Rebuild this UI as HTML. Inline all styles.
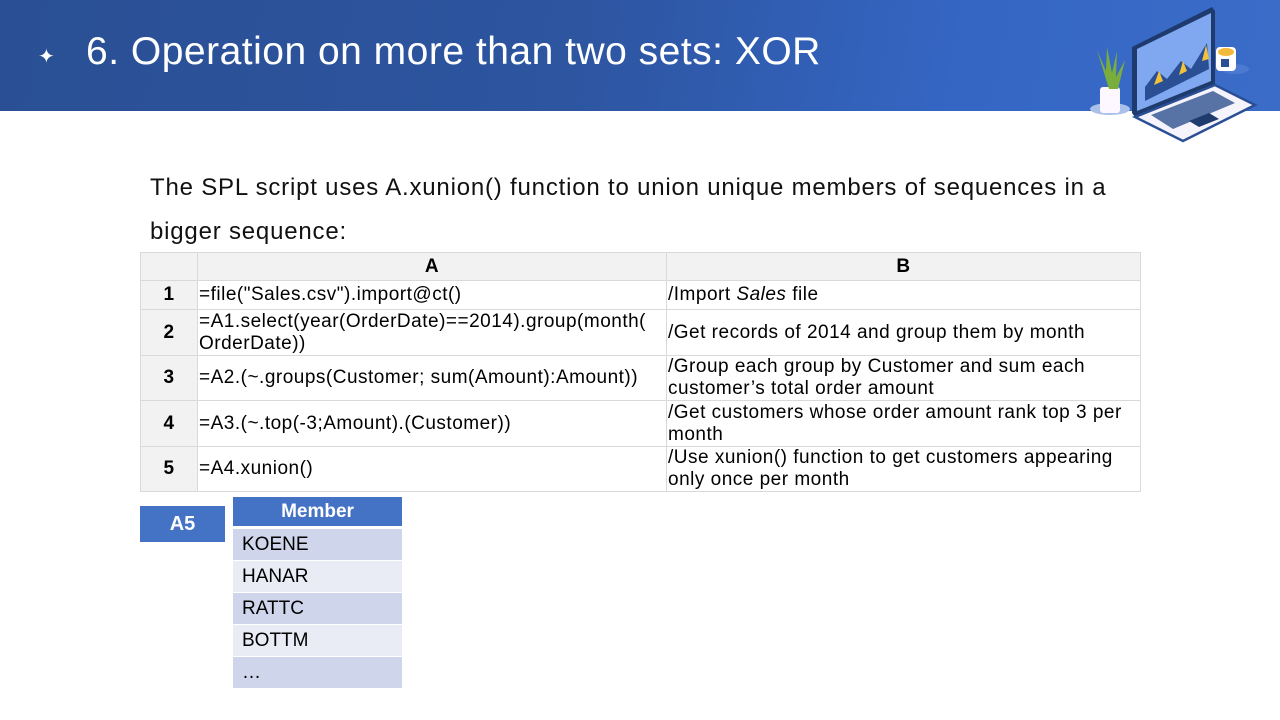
<!DOCTYPE html>
<html><head><meta charset="utf-8"><style>
body{margin:0;width:1280px;height:720px;position:relative;overflow:hidden;background:#fff;font-family:"Liberation Sans",sans-serif}
.hdr{position:absolute;left:0;top:0;width:1280px;height:111px;background:linear-gradient(100deg,#2a4f94 0%,#2d55a0 45%,#3566c4 75%,#3a6cc8 100%)}
.ttl{position:absolute;left:86px;top:30px;color:#fff;font-size:39px;white-space:nowrap;letter-spacing:0.5px}
.star{position:absolute;left:38px;top:44px;color:#fff;font-size:20px}
.p{position:absolute;left:150px;font-size:24px;color:#111;white-space:nowrap;letter-spacing:0.8px}
table.t{position:absolute;left:140px;top:252px;border-collapse:collapse;font-size:19px;color:#000;table-layout:fixed;letter-spacing:0.5px}
table.t td{border:1px solid #d9d9d9;padding:0 1px;vertical-align:middle;line-height:22px;overflow:hidden}
table.t tr.h td{background:#f2f2f2;font-weight:bold;text-align:center}
table.t td.n{background:#f2f2f2;font-weight:bold;text-align:center}
.a5{position:absolute;left:140px;top:506px;width:85px;height:36px;background:#4472c4;color:#fff;font-weight:bold;font-size:20px;text-align:center;line-height:36px}
.m{position:absolute;left:233px;width:169px;height:31px;font-size:19px;line-height:31px;padding-left:9px;box-sizing:border-box}
</style></head><body>
<div class="hdr"></div>
<div class="star">✦</div>
<div class="ttl">6. Operation on more than two sets: XOR</div>
<svg style="position:absolute;left:1085px;top:5px" width="175" height="140" viewBox="0 0 175 140">
<ellipse cx="25" cy="104" rx="20" ry="6" fill="#a9c0ea"/>
<rect x="15" y="82" width="20" height="26" rx="3" fill="#fdf8ff"/>
<path d="M24 84 L12 45 L21 66 L22 42 L27 68 L32 46 L31 72 L40 55 L33 84Z" fill="#7aae3c"/>
<ellipse cx="150" cy="64" rx="14" ry="5" fill="#5a83d6" opacity=".6"/>
<rect x="131" y="42" width="20" height="24" rx="4" fill="#fff"/>
<ellipse cx="141" cy="47" rx="8" ry="4" fill="#f2b93a"/>
<rect x="136" y="54" width="8" height="8" fill="#2a4f94"/>
<path d="M47 42 L127 2 L130 6 L130 80 L50 112 L47 108Z" fill="#1f3b6e"/>
<path d="M52 44 L126 8 L126 76 L52 106Z" fill="#7fa8f0"/>
<path d="M60 82 L72 66 L82 74 L96 56 L106 64 L122 38 L124 64 L60 96Z" fill="#2a4f94"/>
<path d="M74 66 L78 76 L69 80Z M98 56 L102 66 L94 70Z M121 40 L124 54 L117 56Z" fill="#f2c23a"/>
<path d="M50 112 L130 80 L170 100 L98 136Z" fill="#f5f3fb" stroke="#2a4f94" stroke-width="2.5"/>
<path d="M66 110 L128 86 L150 98 L88 124Z" fill="#3b5a94" opacity=".85"/>
<path d="M104 116 L124 108 L134 114 L114 122Z" fill="#1f3b6e"/>
</svg>
<div class="p" style="top:174px">The SPL script uses A.xunion() function to union unique members of sequences in a</div>
<div class="p" style="top:218px">bigger sequence:</div>
<table class="t">
<colgroup><col style="width:57px"><col style="width:469px"><col style="width:474px"></colgroup>
<tr class="h" style="height:28px"><td></td><td>A</td><td>B</td></tr>
<tr style="height:29px"><td class="n">1</td><td>=file("Sales.csv").import@ct()</td><td>/Import <i>Sales</i> file</td></tr>
<tr style="height:46px"><td class="n">2</td><td>=A1.select(year(OrderDate)==2014).group(month(<br>OrderDate))</td><td>/Get records of 2014 and group them by month</td></tr>
<tr style="height:45px"><td class="n">3</td><td>=A2.(~.groups(Customer; sum(Amount):Amount))</td><td>/Group each group by Customer and sum each<br>customer’s total order amount</td></tr>
<tr style="height:46px"><td class="n">4</td><td>=A3.(~.top(-3;Amount).(Customer))</td><td>/Get customers whose order amount rank top 3 per<br>month</td></tr>
<tr style="height:45px"><td class="n">5</td><td>=A4.xunion()</td><td>/Use xunion() function to get customers appearing<br>only once per month</td></tr>
</table>
<div class="a5">A5</div>
<div class="m" style="top:497px;height:29px;line-height:29px;background:#4472c4;color:#fff;font-weight:bold;text-align:center;padding:0">Member</div>
<div class="m" style="top:529px;background:#cfd5ea">KOENE</div>
<div class="m" style="top:561px;background:#e9ebf5">HANAR</div>
<div class="m" style="top:593px;background:#cfd5ea">RATTC</div>
<div class="m" style="top:625px;background:#e9ebf5">BOTTM</div>
<div class="m" style="top:657px;background:#cfd5ea">…</div>
</body></html>
